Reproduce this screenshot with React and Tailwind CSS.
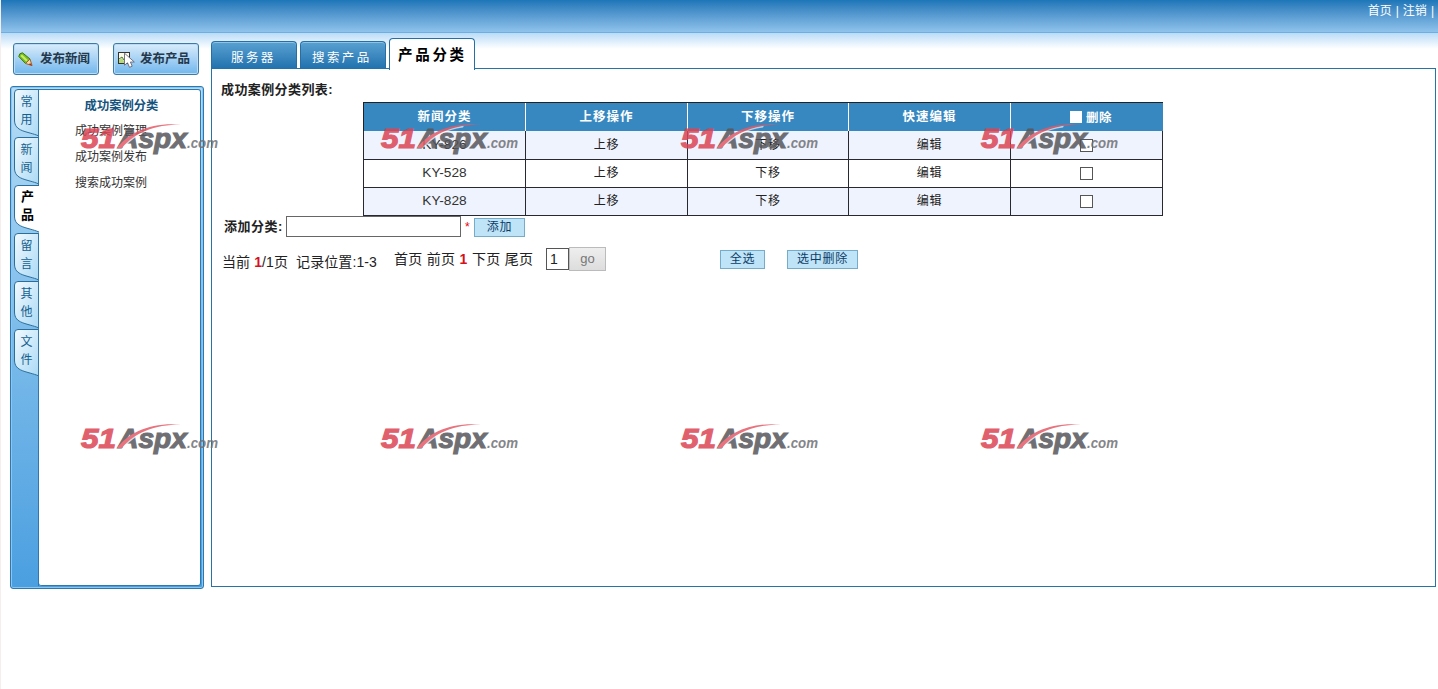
import React from "react";

const sideTabs = [
  ["常", "用"],
  ["新", "闻"],
  ["产", "品"],
  ["留", "言"],
  ["其", "他"],
  ["文", "件"],
];

const rows = ["KY-826", "KY-528", "KY-828"];

function Watermark() {
  return (
    <div className="w-[140px] h-[36px]">
      <svg width="140" height="36" viewBox="0 0 140 36" opacity="0.85">
        <g fontFamily="'Liberation Sans', sans-serif" fontStyle="italic">
          <text x="1" y="28" fontSize="28" fontWeight="700" fill="#dc4554" stroke="#dc4554" strokeWidth="1.2" textLength="35" lengthAdjust="spacingAndGlyphs">51</text>
          <text x="38" y="27.5" fontSize="27" fontWeight="700" fill="#56565b" stroke="#56565b" strokeWidth="1.1" textLength="69" lengthAdjust="spacingAndGlyphs">Aspx</text>
          <text x="107" y="28" fontSize="15" fontWeight="700" fill="#707075" textLength="31" lengthAdjust="spacingAndGlyphs">.com</text>
        </g>
        <path d="M41 26 C51 14 66 8 84 5.5 L83 7.5 C66 10 54 16 45 27 Z" fill="#fff" opacity="0.75" />
        <path d="M37 28 C48 13 70 2 101 4.5 C74 4.5 54 13 42 28 Z" fill="#e45a67" />
      </svg>
    </div>
  );
}

function PencilIcon() {
  return (
    <svg width="15" height="15" viewBox="0 0 15 15">
      <path d="M0.8 4.5 Q1 1 4.5 0.8 L12 7 L7.5 11.5 Z" fill="#79bd21" stroke="#3b790f" />
      <path d="M3.2 3.2 L9 8.8" stroke="#c8ed62" strokeWidth="2.2" />
      <path d="M12 7 L14 13.5 L7.5 11.5 Z" fill="#f8d4a0" stroke="#99662b" />
      <path d="M12 11 L14.5 13.8 L11 12.8 Z" fill="#b22c19" />
    </svg>
  );
}

function CursorIcon() {
  return (
    <svg width="17" height="17" viewBox="0 0 17 17">
      <rect x="0.5" y="1.5" width="11" height="11" fill="#f9fbe9" stroke="#333" />
      <path d="M1 9 L4 7 L6 10 L8 8 V12 H1 Z" fill="#b5d97b" />
      <path d="M1 8 L4 6 L6 9 L8 6" fill="none" stroke="#46763b" />
      <path d="M6.5 2.2 V14.2 L9.5 11.8 L11.5 16.3 L14.2 15.2 L12.4 11 H16.3 Z" fill="#fff" stroke="#667" strokeWidth="0.9" />
    </svg>
  );
}

function ActionButton({ icon, children }) {
  return (
    <button className="w-[86px] h-[32px] flex items-center rounded-[3px] border border-[#3c7aaa] bg-linear-to-b from-[#d9ecfa] to-[#70b7ed] shadow-[inset_0_0_0_1px_#b9dcf5] pl-[4px] text-[12.5px] font-bold text-[#25384c] whitespace-nowrap">
      <span className="w-[22px] shrink-0">{icon}</span>
      <span className="leading-[16px]">{children}</span>
    </button>
  );
}

function SideTab({ chars, active }) {
  return (
    <div className="relative h-12 w-[25px]">
      <svg className="absolute left-0 top-0" width="25" height="48" viewBox="0 0 25 48">
        <defs>
          <linearGradient id="sideTabFill" x1="0" y1="0" x2="1" y2="1">
            <stop offset="0" stopColor="#f2faff" />
            <stop offset="1" stopColor="#a9d9f5" />
          </linearGradient>
        </defs>
        <path
          d="M25 0.5 H4 Q0.5 0.5 0.5 4 V31 C0.5 43 13 42 25 47"
          fill={active ? "#fff" : "url(#sideTabFill)"}
          stroke="#2a6f9c"
        />
        {!active && <path d="M24.5 0 V48" stroke="#2a7ab0" />}
      </svg>
      <div
        className={
          active
            ? "relative pt-[3px] pl-[2px] text-center text-[13px] leading-[18px] font-bold text-black"
            : "relative pt-[4px] text-center text-[12px] leading-[18px] text-[#175f8d]"
        }
      >
        {chars.map((c) => (
          <div key={c}>{c}</div>
        ))}
      </div>
    </div>
  );
}

function Check({ head }) {
  return (
    <span
      className={
        head
          ? "block w-[12px] h-[12px] bg-white mr-[4px] -mt-[3px]"
          : "block w-[13px] h-[13px] border border-[#555] bg-white"
      }
    />
  );
}

function BlueButton({ className, children }) {
  return (
    <button
      className={
        "flex items-center justify-center h-[19px] border border-[#74acc9] bg-[#bfe3f7] pb-[2px] text-[12px] leading-[16px] tracking-[0.8px] text-[#0b3d68] whitespace-nowrap " +
        className
      }
    >
      {children}
    </button>
  );
}

const cols = "grid grid-cols-[162px_162px_161px_162px_152px]";

export default function App() {
  return (
    <div
      className="relative w-[1438px] h-[689px] overflow-hidden bg-white border-l border-[#f6eeee] text-[#222]"
      style={{ fontFamily: "'Liberation Sans', 'Noto Sans CJK SC', sans-serif" }}
    >
      <header className="h-[33px] bg-linear-to-b from-[#1b76b8] to-[#8fc3ec] border-b border-[#6eaee0] flex justify-end pr-[4px] pt-[3px] text-[12px] leading-[17px] text-white whitespace-nowrap">
        <span>首页</span>
        <span className="mx-[4px]">|</span>
        <span>注销</span>
        <span className="ml-[4px]">|</span>
      </header>
      <div className="h-[16px] bg-linear-to-b from-[#b9dcf7] to-white" />

      <div className="flex -mt-[11px]">
        <aside className="w-[194px] ml-[9px] pt-[5px]">
          <div className="flex gap-[14px] pl-[3px]">
            <ActionButton icon={<PencilIcon />}>发布新闻</ActionButton>
            <ActionButton icon={<CursorIcon />}>发布产品</ActionButton>
          </div>
          <div className="mt-[11px] w-[194px] h-[503px] flex rounded-[3px] border border-[#2c79b1] bg-linear-to-b from-[#b5dcf6] via-[#7bbbea] to-[#4a9fe0] shadow-[inset_0_0_0_1px_#8cc5ee] pl-[3px] pt-[2px]">
            <nav className="w-[25px] shrink-0">
              {sideTabs.map((t, i) => (
                <SideTab key={i} chars={t} active={i === 2} />
              ))}
              <div className="h-[209px] border-r border-[#2c79b1]" />
            </nav>
            <div className="w-[162px] h-[497px] bg-white border border-l-0 border-[#2c79b1] rounded-r-[3px] rounded-bl-[3px] pt-[7px]">
              <h2 className="pl-[4px] text-center text-[12.3px] font-bold leading-[18px] text-[#14547e]">成功案例分类</h2>
              <ul className="pl-[36px] text-[12px] leading-[26px] text-[#333] pt-[3px]">
                <li>成功案例管理</li>
                <li>成功案例发布</li>
                <li>搜索成功案例</li>
              </ul>
            </div>
          </div>
        </aside>

        <main className="ml-[7px] w-[1225px]">
          <div className="flex items-end h-[31px]">
            <div className="w-[86px] h-[28px] rounded-t-[4px] border border-b-0 border-[#256fa5] bg-linear-to-b from-[#58a1d2] to-[#1f71ad] shadow-[inset_0_1px_0_#8cc3e7] text-white text-[12.5px] tracking-[2.4px] leading-[32px] pl-[19px] whitespace-nowrap">
              服务器
            </div>
            <div className="ml-[3px] w-[86px] h-[28px] rounded-t-[4px] border border-b-0 border-[#256fa5] bg-linear-to-b from-[#58a1d2] to-[#1f71ad] shadow-[inset_0_1px_0_#8cc3e7] text-white text-[12.5px] tracking-[2.4px] leading-[32px] pl-[11px] whitespace-nowrap">
              搜索产品
            </div>
            <div className="relative z-10 -mb-px ml-[3px] w-[86px] h-[32px] rounded-t-[4px] border border-b-0 border-[#256fa5] bg-white text-black font-bold text-[14.5px] tracking-[2.7px] leading-[32px] pl-[8px] whitespace-nowrap">
              产品分类
            </div>
          </div>

          <section className="w-[1225px] h-[519px] border border-[#2873a6] -mt-px whitespace-nowrap">
            <h1 className="pl-[9px] pt-[11px] h-[33px] text-[13px] tracking-[0.4px] font-bold leading-[20px]">
              成功案例分类列表:
            </h1>
            <div className="ml-[151px] w-[800px] h-[114px]">
              <div className={cols + " h-[29px] w-[800px] bg-[#3788c0] border-t border-l border-[#222] text-white font-bold text-[12.5px] tracking-[1px]"}>
                {["新闻分类", "上移操作", "下移操作", "快速编辑"].map((h) => (
                  <div key={h} className="flex items-center justify-center border-r border-white">{h}</div>
                ))}
                <div className="flex items-center justify-center tracking-[0.4px] pt-[3px] pl-[8px]"><Check head />删除</div>
              </div>
              {rows.map((name, i) => (
                <div
                  key={name}
                  className={
                    cols +
                    (i === 0 ? " h-[29px]" : " h-[28px]") +
                    " w-[800px] border-l border-b border-[#282830] text-[12px] tracking-[0.8px] " +
                    (i % 2 === 0 ? "bg-[#eff3fd]" : "bg-white")
                  }
                >
                  {[name, "上移", "下移", "编辑"].map((c, j) => (
                    <div
                      key={j}
                      className={
                        "flex items-center justify-center border-r border-[#282830] " +
                        (j === 0 ? "text-[13.7px] tracking-[0px] text-[#333]" : "pb-[1px]")
                      }
                    >
                      {c}
                    </div>
                  ))}
                  <div className="flex items-center justify-center border-r border-[#282830]"><Check /></div>
                </div>
              ))}
            </div>

            <div className="flex items-start h-[29px]">
              <span className="w-[62px] ml-[12px] text-[13px] tracking-[0.5px] font-bold leading-[21px]">添加分类:</span>
              <input className="w-[175px] h-[21px] border border-[#666] bg-white" aria-label="添加分类" />
              <span className="ml-[4px] w-[9px] text-[12px] leading-[22px] text-red-600">*</span>
              <BlueButton className="w-[51px] mt-[2px]">添加</BlueButton>
            </div>

            <div className="flex items-start h-[30px] text-[14px] leading-[20px]">
              <span className="w-[172px] ml-[10px] pt-[7px] tracking-[0.1px]">
                当前 <b className="text-[#d8101c]">1</b>/1页&nbsp; 记录位置:1-3
              </span>
              <span className="w-[152px] pt-[4px] tracking-[0.3px]">
                首页 前页 <b className="text-[#d8101c]">1</b> 下页 尾页
              </span>
              <span className="w-[23px] h-[22px] mt-[3px] border border-[#555] pl-[3px]">1</span>
              <button className="w-[37px] h-[24px] mt-[2px] border border-[#bbb] bg-linear-to-b from-[#eee] to-[#ddd] text-[13px] text-[#777]">go</button>
              <BlueButton className="w-[45px] ml-[114px] mt-[5px]">全选</BlueButton>
              <BlueButton className="w-[71px] ml-[22px] mt-[5px]">选中删除</BlueButton>
            </div>
          </section>
        </main>
      </div>

      <div className="pointer-events-none absolute left-[79px] top-[120px] z-20 grid grid-cols-[repeat(4,300px)] auto-rows-[300px]">
        {Array.from({ length: 8 }, (_, i) => (
          <Watermark key={i} />
        ))}
      </div>
    </div>
  );
}
